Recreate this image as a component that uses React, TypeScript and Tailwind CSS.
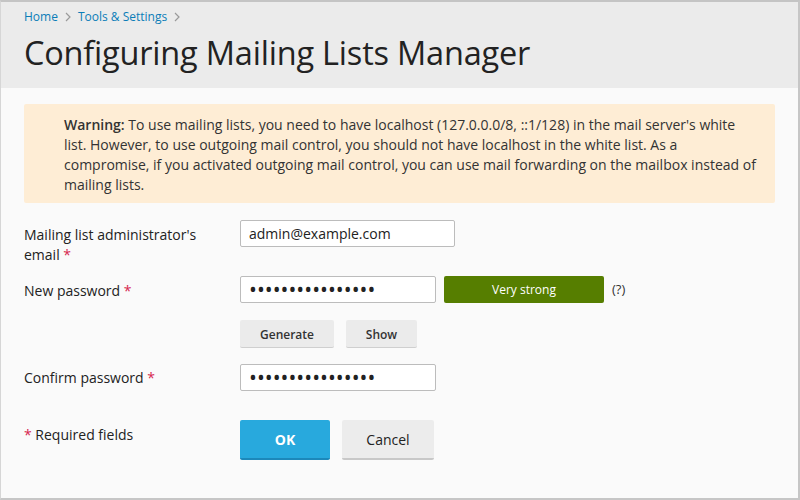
import React from "react";

const Star = () => <span className="text-[#d6264f]">*</span>;

const Chevron = () => (
  <svg width="8" height="10" viewBox="0 0 8 10" className="mx-[6px]">
    <path d="M2 1 L6 5 L2 9" fill="none" stroke="#9a9a9a" strokeWidth="1.2" />
  </svg>
);

export default function App() {
  return (
    <div
      className="w-[800px] h-[500px] overflow-hidden bg-[#fafafa] border-t-2 border-t-[#c4c4c4] border-l border-l-[#d6d6d6] border-r-2 border-r-[#c6c6c6] border-b-2 border-b-[#c6c6c6] text-[#222]"
      style={{ fontFamily: '"Open Sans", "Liberation Sans", sans-serif' }}
    >
      <div className="h-[86px] bg-[#ebebeb] px-[23px] pt-[6px]">
        <div className="flex items-center text-[12px] leading-[18px] text-[#0a7db8]">
          <span>Home</span>
          <Chevron />
          <span>Tools &amp; Settings</span>
          <Chevron />
        </div>
        <h1 className="mt-[7px] text-[32.5px] leading-[40px] font-normal text-[#222] tracking-[-0.2px]">
          Configuring Mailing Lists Manager
        </h1>
      </div>

      <div className="px-[23px] pt-[16px]">
        <div className="bg-[#feedd5] rounded-[2px] pl-[40px] pr-[8px] pt-[11px] pb-[8px] text-[14px] leading-[20px] text-[#333] whitespace-nowrap">
          <b className="font-semibold">Warning:</b> To use mailing lists, you need to have localhost
          (127.0.0.0/8, ::1/128) in the mail server's white
          <br />
          list. However, to use outgoing mail control, you should not have localhost in the white
          list. As a
          <br />
          compromise, if you activated outgoing mail control, you can use mail forwarding on the
          mailbox instead of
          <br />
          mailing lists.
        </div>

        <div className="flex mt-[17px] text-[14px]">
          <div className="w-[216px] pt-[5px] leading-[20px] pr-[10px]">
            Mailing list administrator's email <Star />
          </div>
          <input
            readOnly
            value="admin@example.com"
            className="w-[215px] h-[27px] bg-white border border-[#bcbcbc] rounded-[2px] px-[8px] text-[14px] text-[#222] outline-none"
          />
        </div>

        <div className="flex items-start mt-[11px] text-[14px]">
          <div className="w-[216px] pt-[5px] leading-[20px]">
            New password <Star />
          </div>
          <input
            readOnly
            type="password"
            value="abcdefghijklmnop"
            className="w-[196px] h-[27px] bg-white border border-[#bcbcbc] rounded-[2px] px-[8px] text-[21px] text-[#222] outline-none"
          />
          <div className="ml-[8px] w-[160px] h-[27px] bg-[#567e00] rounded-[2px] flex items-center justify-center text-white text-[12px]">
            Very strong
          </div>
          <span className="ml-[8px] leading-[27px] text-[13px] text-[#333]">(?)</span>
        </div>

        <div className="flex mt-[17px] ml-[216px] gap-[12px] text-[12px] text-[#333]">
          <button className="w-[94px] h-[28px] pt-[2px] bg-[#ebebeb] rounded-[2px] border-b border-b-[#cfcfcf] font-semibold">
            Generate
          </button>
          <button className="w-[71px] h-[28px] pt-[2px] bg-[#ebebeb] rounded-[2px] border-b border-b-[#cfcfcf] font-semibold">
            Show
          </button>
        </div>

        <div className="flex items-start mt-[16px] text-[14px]">
          <div className="w-[216px] pt-[4px] leading-[20px]">
            Confirm password <Star />
          </div>
          <input
            readOnly
            type="password"
            value="abcdefghijklmnop"
            className="w-[196px] h-[27px] bg-white border border-[#bcbcbc] rounded-[2px] px-[8px] text-[21px] text-[#222] outline-none"
          />
        </div>

        <div className="flex items-start mt-[29px] text-[14px]">
          <div className="w-[216px] pt-[5px] leading-[20px]">
            <Star /> Required fields
          </div>
          <button className="w-[90px] h-[40px] bg-[#28a9dd] rounded-[2px] border-b-2 border-b-[#1c88ba] text-white font-bold text-[14px]">
            OK
          </button>
          <button className="ml-[12px] w-[92px] h-[40px] bg-[#ececec] rounded-[2px] border-b-2 border-b-[#c8c8c8] text-[#222] text-[14px]">
            Cancel
          </button>
        </div>
      </div>
    </div>
  );
}
